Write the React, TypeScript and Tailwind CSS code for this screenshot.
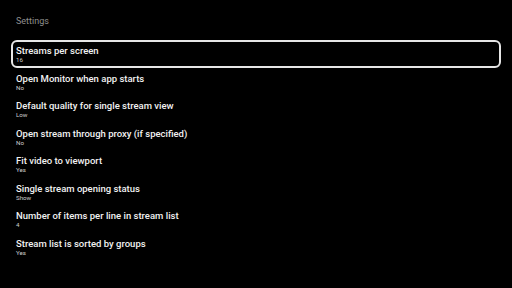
const items: { title: string; value: string }[] = [
  { title: "Streams per screen", value: "16" },
  { title: "Open Monitor when app starts", value: "No" },
  { title: "Default quality for single stream view", value: "Low" },
  { title: "Open stream through proxy (if specified)", value: "No" },
  { title: "Fit video to viewport", value: "Yes" },
  { title: "Single stream opening status", value: "Show" },
  { title: "Number of items per line in stream list", value: "4" },
  { title: "Stream list is sorted by groups", value: "Yes" },
];

export default function App() {
  return (
    <div className="w-[512px] h-[288px] bg-black overflow-hidden font-['Roboto',sans-serif]">
      <div className="pl-[16px] pt-[15px] h-[40px] text-[9px] leading-[12px] text-[#8f8f8f]">Settings</div>
      <div className="px-[11px] flex flex-col">
        {items.map((it, i) => (
          <div
            key={it.title}
            className={
              "h-[27.5px] rounded-[6px] border-2 pl-[3px] pt-[3px] " +
              (i === 0 ? "border-[#e6e6e6]" : "border-transparent")
            }
          >
            <div className="text-[9.5px] leading-[12px] font-medium text-[#f2f2f2]">{it.title}</div>
            <div className="text-[6.2px] leading-[7px] text-[#cfcfcf]">{it.value}</div>
          </div>
        ))}
      </div>
    </div>
  );
}
